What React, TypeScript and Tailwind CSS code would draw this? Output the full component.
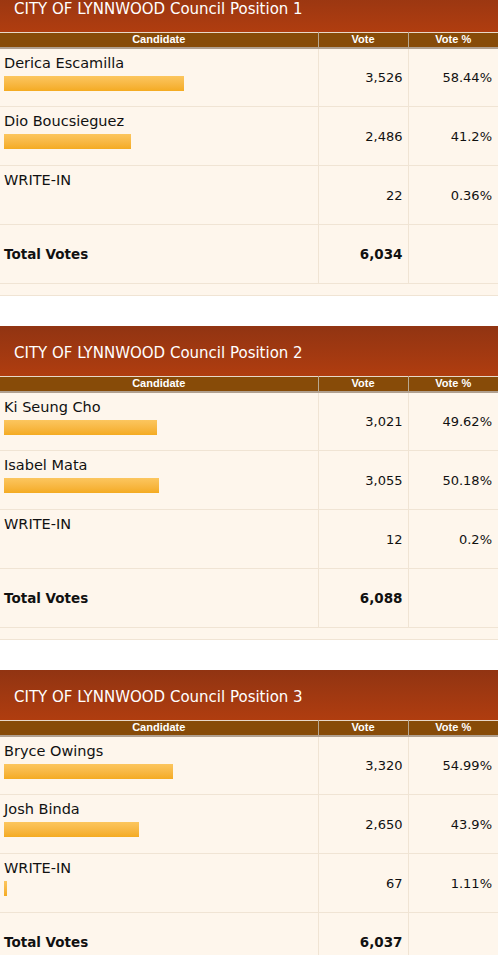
const races = [
  {
    title: "CITY OF LYNNWOOD Council Position 1",
    total: "6,034",
    rows: [
      { name: "Derica Escamilla", votes: "3,526", pct: 58.44 },
      { name: "Dio Boucsieguez", votes: "2,486", pct: 41.2 },
      { name: "WRITE-IN", votes: "22", pct: 0.36 },
    ],
  },
  {
    title: "CITY OF LYNNWOOD Council Position 2",
    total: "6,088",
    rows: [
      { name: "Ki Seung Cho", votes: "3,021", pct: 49.62 },
      { name: "Isabel Mata", votes: "3,055", pct: 50.18 },
      { name: "WRITE-IN", votes: "12", pct: 0.2 },
    ],
  },
  {
    title: "CITY OF LYNNWOOD Council Position 3",
    total: "6,037",
    rows: [
      { name: "Bryce Owings", votes: "3,320", pct: 54.99 },
      { name: "Josh Binda", votes: "2,650", pct: 43.9 },
      { name: "WRITE-IN", votes: "67", pct: 1.11 },
    ],
  },
];

const tahoma = "font-['Tahoma','DejaVu_Sans',sans-serif]";
const verdana = "font-['Verdana','DejaVu_Sans',sans-serif]";

function RaceTable({ race }: { race: (typeof races)[number] }) {
  return (
    <div className="w-[498px]">
      {/* TITLE */}
      <div
        className={`${tahoma} flex h-[50px] items-center bg-gradient-to-b from-[#913412] to-[#b03d0f] pt-[3px] pl-[14px] text-[15px] leading-[18px] text-white`}
      >
        {race.title}
      </div>

      <table className="w-full table-fixed border-collapse bg-[#fef6ec]">
        <colgroup>
          <col className="w-[318px]" />
          <col className="w-[90px]" />
          <col className="w-[90px]" />
        </colgroup>
        <thead>
          <tr className="h-[15px] border-t border-t-[#e8d8c8] border-b-2 border-b-[#b0a090] bg-[#874b08] font-['Liberation_Sans',Arial,sans-serif] text-[11px] leading-[13px] font-bold text-white">
            <th className="border-r border-r-[#b8a890] p-0">Candidate</th>
            <th className="border-r border-r-[#b8a890] p-0">Vote</th>
            <th className="p-0">Vote %</th>
          </tr>
        </thead>
        <tbody>
          {race.rows.map((row) => (
            <tr key={row.name} className="h-[59px] border-b border-[#f0e4d4]">
              <td className="border-r border-[#f0e4d4] px-[4px] align-top">
                <div className={`${tahoma} mt-[5px] text-[14.5px] leading-[18px] text-[#111]`}>
                  {row.name}
                </div>
                {row.pct >= 1 && (
                  <div
                    className="mt-[4px] h-[15px] bg-gradient-to-b from-[#fcc65e] to-[#f4ab20]"
                    style={{ width: `${Math.round(row.pct * 3.08)}px` }}
                  />
                )}
              </td>
              <td className={`${verdana} border-r border-[#f0e4d4] pr-[5px] pt-[1px] text-right text-[13px] leading-[16px] text-[#111]`}>
                {row.votes}
              </td>
              <td className={`${verdana} pr-[6px] pt-[1px] text-right text-[13px] leading-[16px] text-[#111]`}>
                {row.pct}%
              </td>
            </tr>
          ))}
          <tr className={`${verdana} h-[59px] border-b border-[#f0e4d4] text-[13.5px] leading-[16px] font-bold text-[#111]`}>
            <td className="border-r border-[#f0e4d4] px-[4px]">Total Votes</td>
            <td className="border-r border-[#f0e4d4] pr-[5px] text-right">{race.total}</td>
            <td />
          </tr>
          <tr className="h-[12px] border-b border-[#f0e4d4]">
            <td colSpan={3} className="p-0" />
          </tr>
        </tbody>
      </table>
    </div>
  );
}

export default function App() {
  return (
    <div className="min-h-screen bg-white">
      <div className="-mt-[18px] flex flex-col gap-[30px]">
        {races.map((race) => (
          <RaceTable key={race.title} race={race} />
        ))}
      </div>
    </div>
  );
}
